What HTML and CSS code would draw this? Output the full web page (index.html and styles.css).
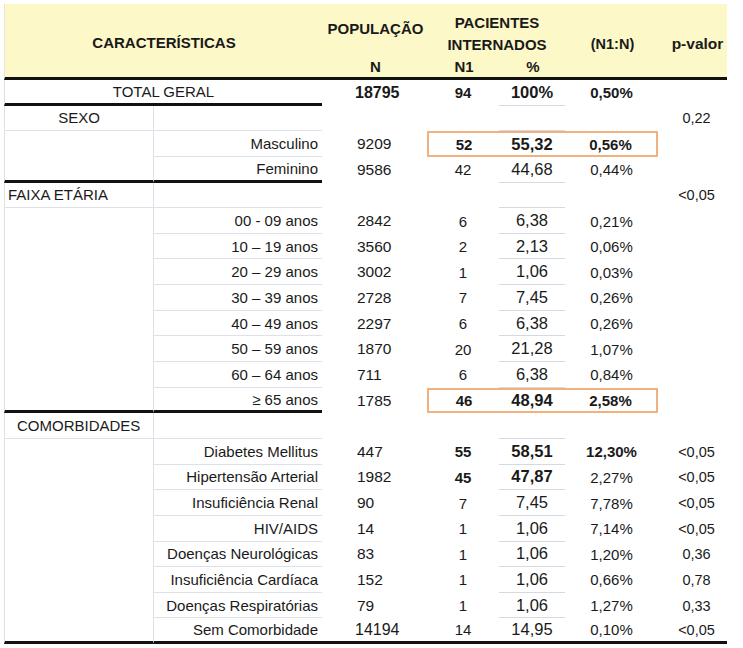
FILE: index.html
```html
<!DOCTYPE html>
<html lang="pt">
<head>
<meta charset="utf-8">
<title>Características</title>
<link rel="stylesheet" href="styles.css">
</head>
<body>
<div class="table">
  <div class="head">
    <div class="h-carac">CARACTERÍSTICAS</div>
    <div class="h-pop">POPULAÇÃO</div>
    <div class="h-n">N</div>
    <div class="h-pac">PACIENTES</div>
    <div class="h-int">INTERNADOS</div>
    <div class="h-n1">N1</div>
    <div class="h-pct">%</div>
    <div class="h-ratio">(N1:N)</div>
    <div class="h-p">p-valor</div>
  </div>

  <div class="row">
    <div class="c c-total">TOTAL GERAL</div>
    <div class="c c-n big b">18795</div>
    <div class="c c-n1 b">94</div>
    <div class="c c-pct b">100%</div>
    <div class="c c-ratio b">0,50%</div>
    <div class="c c-p"></div>
  </div>

  <div class="row">
    <div class="c c-cat c-center">SEXO</div>
    <div class="c c-lab"></div>
    <div class="c c-n"></div>
    <div class="c c-n1"></div>
    <div class="c c-pct"></div>
    <div class="c c-ratio"></div>
    <div class="c c-p">0,22</div>
  </div>
  <div class="group">
    <div class="merged"></div>
    <div class="rows">
      <div class="sub">
        <div class="c c-lab">Masculino</div>
        <div class="c c-n">9209</div>
        <div class="hl">
          <div class="c c-n1 b">52</div>
          <div class="c c-pct nb b">55,32</div>
          <div class="c c-ratio b">0,56%</div>
        </div>
        <div class="c c-p"></div>
      </div>
      <div class="sub last">
        <div class="c c-lab">Feminino</div>
        <div class="c c-n">9586</div>
        <div class="c c-n1">42</div>
        <div class="c c-pct">44,68</div>
        <div class="c c-ratio">0,44%</div>
        <div class="c c-p"></div>
      </div>
    </div>
  </div>

  <div class="row">
    <div class="c c-cat c-faixa">FAIXA ETÁRIA</div>
    <div class="c c-lab"></div>
    <div class="c c-n"></div>
    <div class="c c-n1"></div>
    <div class="c c-pct"></div>
    <div class="c c-ratio"></div>
    <div class="c c-p">&lt;0,05</div>
  </div>
  <div class="group">
    <div class="merged"></div>
    <div class="rows">
      <div class="sub">
        <div class="c c-lab">00 - 09 anos</div>
        <div class="c c-n">2842</div>
        <div class="c c-n1">6</div>
        <div class="c c-pct">6,38</div>
        <div class="c c-ratio">0,21%</div>
        <div class="c c-p"></div>
      </div>
      <div class="sub">
        <div class="c c-lab">10 – 19 anos</div>
        <div class="c c-n">3560</div>
        <div class="c c-n1">2</div>
        <div class="c c-pct">2,13</div>
        <div class="c c-ratio">0,06%</div>
        <div class="c c-p"></div>
      </div>
      <div class="sub">
        <div class="c c-lab">20 – 29 anos</div>
        <div class="c c-n">3002</div>
        <div class="c c-n1">1</div>
        <div class="c c-pct">1,06</div>
        <div class="c c-ratio">0,03%</div>
        <div class="c c-p"></div>
      </div>
      <div class="sub">
        <div class="c c-lab">30 – 39 anos</div>
        <div class="c c-n">2728</div>
        <div class="c c-n1">7</div>
        <div class="c c-pct">7,45</div>
        <div class="c c-ratio">0,26%</div>
        <div class="c c-p"></div>
      </div>
      <div class="sub">
        <div class="c c-lab">40 – 49 anos</div>
        <div class="c c-n">2297</div>
        <div class="c c-n1">6</div>
        <div class="c c-pct">6,38</div>
        <div class="c c-ratio">0,26%</div>
        <div class="c c-p"></div>
      </div>
      <div class="sub">
        <div class="c c-lab">50 – 59 anos</div>
        <div class="c c-n">1870</div>
        <div class="c c-n1">20</div>
        <div class="c c-pct">21,28</div>
        <div class="c c-ratio">1,07%</div>
        <div class="c c-p"></div>
      </div>
      <div class="sub">
        <div class="c c-lab">60 – 64 anos</div>
        <div class="c c-n">711</div>
        <div class="c c-n1">6</div>
        <div class="c c-pct">6,38</div>
        <div class="c c-ratio">0,84%</div>
        <div class="c c-p"></div>
      </div>
      <div class="sub last">
        <div class="c c-lab">≥ 65 anos</div>
        <div class="c c-n">1785</div>
        <div class="hl">
          <div class="c c-n1 b">46</div>
          <div class="c c-pct nb b">48,94</div>
          <div class="c c-ratio b">2,58%</div>
        </div>
        <div class="c c-p"></div>
      </div>
    </div>
  </div>

  <div class="row">
    <div class="c c-cat c-comorb">COMORBIDADES</div>
    <div class="c c-lab"></div>
    <div class="c c-n"></div>
    <div class="c c-n1"></div>
    <div class="c c-pct"></div>
    <div class="c c-ratio"></div>
    <div class="c c-p"></div>
  </div>
  <div class="group">
    <div class="merged"></div>
    <div class="rows">
      <div class="sub">
        <div class="c c-lab">Diabetes Mellitus</div>
        <div class="c c-n">447</div>
        <div class="c c-n1 b">55</div>
        <div class="c c-pct b">58,51</div>
        <div class="c c-ratio b">12,30%</div>
        <div class="c c-p">&lt;0,05</div>
      </div>
      <div class="sub">
        <div class="c c-lab">Hipertensão Arterial</div>
        <div class="c c-n">1982</div>
        <div class="c c-n1 b">45</div>
        <div class="c c-pct b">47,87</div>
        <div class="c c-ratio">2,27%</div>
        <div class="c c-p">&lt;0,05</div>
      </div>
      <div class="sub">
        <div class="c c-lab">Insuficiência Renal</div>
        <div class="c c-n">90</div>
        <div class="c c-n1">7</div>
        <div class="c c-pct">7,45</div>
        <div class="c c-ratio">7,78%</div>
        <div class="c c-p">&lt;0,05</div>
      </div>
      <div class="sub">
        <div class="c c-lab">HIV/AIDS</div>
        <div class="c c-n">14</div>
        <div class="c c-n1">1</div>
        <div class="c c-pct">1,06</div>
        <div class="c c-ratio">7,14%</div>
        <div class="c c-p">&lt;0,05</div>
      </div>
      <div class="sub">
        <div class="c c-lab">Doenças Neurológicas</div>
        <div class="c c-n">83</div>
        <div class="c c-n1">1</div>
        <div class="c c-pct">1,06</div>
        <div class="c c-ratio">1,20%</div>
        <div class="c c-p">0,36</div>
      </div>
      <div class="sub">
        <div class="c c-lab">Insuficiência Cardíaca</div>
        <div class="c c-n">152</div>
        <div class="c c-n1">1</div>
        <div class="c c-pct">1,06</div>
        <div class="c c-ratio">0,66%</div>
        <div class="c c-p">0,78</div>
      </div>
      <div class="sub">
        <div class="c c-lab">Doenças Respiratórias</div>
        <div class="c c-n">79</div>
        <div class="c c-n1">1</div>
        <div class="c c-pct">1,06</div>
        <div class="c c-ratio">1,27%</div>
        <div class="c c-p">0,33</div>
      </div>
      <div class="sub last final">
        <div class="c c-lab">Sem Comorbidade</div>
        <div class="c c-n big">14194</div>
        <div class="c c-n1">14</div>
        <div class="c c-pct">14,95</div>
        <div class="c c-ratio">0,10%</div>
        <div class="c c-p">&lt;0,05</div>
      </div>
    </div>
  </div>
</div>
</body>
</html>
```

FILE: styles.css
```css
* { box-sizing: border-box; }

html, body {
  margin: 0;
  padding: 0;
  background: #ffffff;
}

body {
  font-family: "Liberation Sans", Arial, sans-serif;
  color: #1a1a1a;
  font-size: 15px;
}

.table {
  margin: 4px 0 0 4px;
  width: 723px;
}

/* ---------- header ---------- */
.head {
  display: grid;
  grid-template-columns: 149px 169px 105px 72px 66px 93px 69px;
  grid-template-rows: 29px 22px 22px;
  height: 76px;
  background: #fcf8c8;
  border-left: 1px solid #e4e4dc;
  border-bottom: 3px solid #111;
  font-weight: 700;
  font-size: 15px;
}

.head > div {
  display: flex;
  align-items: center;
  justify-content: center;
  white-space: nowrap;
}

.h-carac { grid-column: 1 / 3; grid-row: 1 / 4; padding-top: 3px; }
.h-pop { grid-column: 3; grid-row: 1 / 3; padding-bottom: 2px; }
.h-n { grid-column: 3; grid-row: 3; }
.h-pac { grid-column: 4 / 6; grid-row: 1; align-self: end; height: 22px; padding-top: 1px; }
.h-int { grid-column: 4 / 6; grid-row: 2; }
.h-n1 { grid-column: 4; grid-row: 3; }
.h-pct { grid-column: 5; grid-row: 3; }
.h-ratio { grid-column: 6; grid-row: 2; font-size: 14.5px; }
.h-p { grid-column: 7; grid-row: 2; padding-left: 8px; font-size: 15.5px; }

/* ---------- body ---------- */
.row {
  display: grid;
  grid-template-columns: 149px 169px 105px 72px 66px 93px 69px;
  height: 25.65px;
}

.group {
  display: flex;
}

.merged {
  width: 149px;
  flex: none;
  border-left: 1px solid #dfe1ea;
  border-bottom: 3px solid #111;
}

.rows {
  display: flex;
  flex-direction: column;
}

.sub {
  display: grid;
  grid-template-columns: 169px 105px 72px 66px 93px 69px;
  height: 25.65px;
}

.c {
  display: flex;
  align-items: center;
  justify-content: center;
  white-space: nowrap;
  min-width: 0;
}

.b { font-weight: 700; }

.c-total {
  grid-column: 1 / 3;
  border-left: 1px solid #dfe1ea;
  border-bottom: 3px solid #111;
}

.c-cat {
  border-left: 1px solid #dfe1ea;
  border-bottom: 1px solid #dfe1ea;
}

.c-center { justify-content: center; }
.c-faixa { justify-content: flex-start; padding-left: 3px; }
.c-comorb { justify-content: flex-start; padding-left: 12px; }

.c-lab {
  justify-content: flex-end;
  padding-right: 4px;
  border-left: 1px solid #dfe1ea;
  border-bottom: 1px solid #dfe1ea;
}

.sub.last .c-lab { border-bottom: 3px solid #111; }

.c-n {
  justify-content: flex-start;
  padding-left: 35px;
  font-size: 15.5px;
}

.c-n.big {
  padding-left: 33px;
  font-size: 16px;
}

.c-n1 { font-size: 15px; }

.c-pct {
  font-size: 16.5px;
  border-bottom: 1px solid #d6d9e3;
}

.c-pct.nb { border-bottom: 0; }

.c-ratio { font-size: 15px; }

.c-p {
  font-size: 14.5px;
  padding-left: 8px;
}

.sub.final .c { border-bottom: 3px solid #111; }

/* highlight boxes */
.hl {
  grid-column: 3 / 6;
  display: grid;
  grid-template-columns: 70px 66px 91px;
  border: 2px solid #f2b07c;
}
```
